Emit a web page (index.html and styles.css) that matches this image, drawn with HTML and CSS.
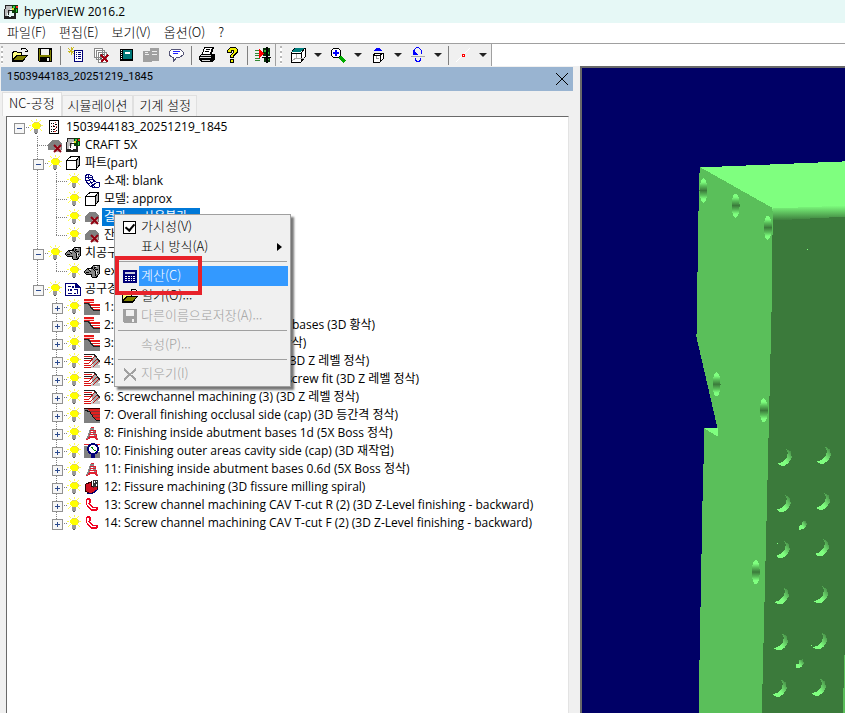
FILE: index.html
```
<!DOCTYPE html>
<html lang="ko">
<head>
<meta charset="utf-8">
<title>hyperVIEW 2016.2</title>
<link rel="stylesheet" href="styles.css">
</head>
<body>
<svg class="defs" aria-hidden="true">
  <symbol id="bulb" viewBox="0 0 16 16"><path d="M3 1l2 2M13 1l-2 2M8 0v2M1 6h2M13 6h2M2 12l3-3M14 12l-3-3" stroke="#ffff50"/><path d="M6 3h4l2 2v3l-2 2H6L4 8V5z" fill="#ff0"/><path d="M6 3h4M11 4v1M12 5v3" stroke="#e0d060" fill="none"/><path d="M6 10h4v4H6z" fill="#999"/><path d="M7 14h2v1H7z" fill="#555"/></symbol>
  <symbol id="open" viewBox="0 0 16 16"><path d="M0 14V5l1-1h3l1 1h5v3h6l-5 7H0z" fill="#000"/><path d="M1 12V6l1-1h2l1 1h4v2H4z" fill="#ffff80"/><path d="M2 13l3-4h9l-4 4z" fill="#808000"/><path d="M9 3V2l1-1h3l2 2v2M13 4h3" stroke="#000" fill="none"/></symbol>
  <symbol id="save" viewBox="0 0 16 16"><path d="M1 1h14v14H2l-1-1z" fill="currentColor"/><path d="M4 2h8v6H4z" fill="#f0f0f0"/><path d="M10 11h2v3h-2z" fill="#f0f0f0"/></symbol>
  <symbol id="machine" viewBox="0 0 16 16"><path d="M3 2h6v3H7v4H4v3H2V5h1z" fill="#bbb"/><path d="M2 1h8v1H2zM2 1h1v4H2zM1 5h1v8H1zM5 6h1v5H5zM5 6h4v1H5zM1 12h5v1H1z" fill="#222"/><path d="M9 1h6v8H9z" fill="#084008"/><path d="M10 2h2v2h-2zM13 5h1v3h-1z" fill="#3c4"/><path d="M13 2h2v2h-2z" fill="#f22"/><path d="M9 4h2v2H9z" fill="#dd2"/><path d="M11 9h2v6H1v-2h7v-1h3z" fill="#222"/></symbol>
  <symbol id="nolink" viewBox="0 0 16 16"><path d="M1 13V8l4-5h6l4 3v7z" fill="#808080"/><path d="M8 9h6v6H8z" fill="#c0a8a8"/><path d="M7 8l7 7M14 8l-7 7" stroke="#900010" stroke-width="2" shape-rendering="auto"/></symbol>
  <symbol id="cube" viewBox="0 0 16 16"><path d="M2 5l4-4h9v9l-4 5H2z" fill="#fff"/><path d="M11 5l4-3v8l-4 5z" fill="#b0b0b0"/><path d="M2 5.500h9v9H1.500V5.500L6 1.500h8.500V10L11 14.500V5.500l3.500-4" fill="none" stroke="#000"/></symbol>
  <symbol id="doc" viewBox="0 0 16 16"><path d="M3 1h10v14H3z" fill="#fff"/><path d="M3 1h10v1H3zM3 14h10v1H3zM3 1h1v14H3zM12 1h1v14h-1z" fill="#000"/><path d="M5 4h1v1H5zM5 7h1v1H5zM5 10h1v1H5zM5 12h1v1H5zM7 4h1v1H7zM9 5h2v1H9zM7 7h2v1H7zM10 8h1v1h-1zM7 10h2v1H7zM10 11h1v1h-1zM7 12h1v1H7z" fill="#000"/><path d="M9 3h1v1H9zM7 6h1v1H7zM10 7h1v1h-1zM9 9h1v1H9zM8 12h2v1H8z" fill="#d33"/></symbol>
  <symbol id="mesh" viewBox="0 0 16 16"><path d="M1 3l3-2 4 2v3l4 3h3v5l-4 1-5-2-5-6z" fill="#fff" stroke="#007"/><path d="M4 1c0 6 3 9 8 14M1 5l7-1M2 8l7-2M4 11l7-3M7 13l7-4" stroke="#007" fill="none"/></symbol>
  <symbol id="clamp" viewBox="0 0 16 16"><path d="M0 9l4-4 3 1 3-4h5v9l-3 4-4-1-1-3-4 1z" fill="#888" stroke="#000"/><path d="M4 6l3 3M8 5l3 3v5M12 3l-2 3M14 6h-3M2 9h3M14 9h-3" stroke="#000" fill="none"/><path d="M5 6h2v1H5zM11 3h2v1h-2zM12 8h1v3h-1z" fill="#eee"/></symbol>
  <symbol id="list" viewBox="0 0 16 16"><path d="M0 2h11l5 4v9H0z" fill="#007"/><path d="M1 3h9v4h5v7H1z" fill="#fff"/><path d="M3 5h3v1H3zM3 8h1v2H3zM5 8h2v2H5zM3 12h4v1H3zM7 5h2v2H7zM9 12h2v1H9zM9 8h4v1H9zM12 9h1v4h-1z" fill="#007"/></symbol>
  <symbol id="rough" viewBox="0 0 16 16"><path d="M0 3h16v13H0z" fill="#808080"/><path d="M5 3h11v9h-5L7 8z" fill="#fff"/><path d="M0 0h10v4H0zM6 5h10v2H6zM8 8h8v1H8zM9 10h7v1H9z" fill="#e81818"/><path d="M0 2h10v1H0z" fill="#fcc"/><path d="M10 0h6v4h-6z" fill="#fff"/><path d="M0 4h3l3 1 2 4 3 2h5v1h-6l-3-2-2-4-3-1H0z" fill="#222"/></symbol>
  <symbol id="level" viewBox="0 0 16 16"><path d="M0 1h10l6 7-2 8H0z" fill="#fff"/><path d="M7 6l4-4 5 7-6 6z" fill="#aaa"/><path d="M8 12h8v3H7z" fill="#c8c8c8"/><path d="M0 3h8v1H0zM0 7h6v1H0zM0 10h5v1H0zM0 12h6v1H0zM0 14h7v1H0z" fill="#d81010"/><path d="M0 1h10v1H0zM0 5h8v1H0z" fill="#222"/><path d="M6 13l8-8M9 14l6-6M5 10l6-7" stroke="#c01818"/><path d="M10 1l6 8" stroke="#222" fill="none"/></symbol>
  <symbol id="finish" viewBox="0 0 16 16"><path d="M0 1h16v15H0z" fill="#808080"/><path d="M3 2h13v11h-4L8 9 6 4z" fill="#e22020"/><path d="M6 4h10v1H6zM8 7h8v1H8zM9 10h7v1H9z" fill="#833"/><path d="M0 1h16v1H0z" fill="#300"/><path d="M1 3l5 2 3 5 3 3h4" stroke="#111" fill="none"/></symbol>
  <symbol id="boss" viewBox="0 0 16 16"><path d="M8 2c-2 3-2 8-5 12M8 2c2 3 2 8 5 12" stroke="#888" stroke-width="2" fill="none"/><path d="M7 2h3M6 5h5v2H6M5 9h7v2H5M4 12h9M2 15l4-2M14 15l-4-3" stroke="#e02030" fill="none"/></symbol>
  <symbol id="rest" viewBox="0 0 16 16"><path d="M0 3h5v12H0z" fill="#808080"/><path d="M5 9h11v6H5z" fill="#808080"/><path d="M0 1h16v1H0z" fill="#d22"/><circle cx="9" cy="6" r="5" fill="#fff" stroke="#007" stroke-width="2"/><path d="M7 4c2 0 2 4 5 4" stroke="#080" fill="none"/><path d="M7 11h4v4H7z" fill="#007"/></symbol>
  <symbol id="fissure" viewBox="0 0 16 16"><path d="M2 5l5-2v5l6-2v5l-6 4-6-3z" fill="#d01020" stroke="#300"/><path d="M9 1h5v6l-5 2z" fill="#333"/><path d="M10 2h1v2h-1zM12 2h1v1h-1zM12 5h1v2h-1z" fill="#fff"/><path d="M3 14l5 1 6-5" stroke="#007" fill="none"/></symbol>
  <symbol id="hook" viewBox="0 0 16 16"><path d="M3 1h3l1 2v2L6 7l3 3h4l1 1v2l-2 1H8l-4-3-2-4V3z" fill="#f00020"/><path d="M3 3h2v2L4 7l4 4h4v1H8l-3-2-2-3z" fill="#fff"/></symbol>
</svg>

<header class="titlebar"><svg class="ic"><use href="#machine"/></svg><h1>hyperVIEW 2016.2</h1></header>
<nav class="menubar"><button>파일(F)</button><button>편집(E)</button><button>보기(V)</button><button>옵션(O)</button><button>?</button></nav>

<div class="toolbar">
  <div class="band">
    <i class="grip"></i>
    <button aria-label="열기"><svg class="ic"><use href="#open"/></svg></button>
    <button aria-label="저장"><svg class="ic" viewBox="0 0 16 16"><path d="M1 1h14v14H2l-1-1z" fill="#000"/><path d="M2 2h1v12H2zM13 3h1v11h-1zM3 8h10v2H3z" fill="#808000"/><path d="M4 2h8v6H4z" fill="#f0f0f0"/><path d="M10 11h2v3h-2z" fill="#f0f0f0"/></svg></button>
    <i class="sep"></i>
    <button aria-label="새 목록"><svg class="ic" viewBox="0 0 16 16"><path d="M6 3h9v12H6z" fill="#007"/><path d="M7 4h7v10H7z" fill="#fff"/><path d="M8 5h1v1H8zM10 5h3v1h-3zM8 7h1v1H8zM10 7h3v1h-3zM8 9h1v1H8zM10 9h3v1h-3zM8 11h1v1H8zM10 11h3v1h-3z" fill="#007"/><path d="M0 1l6 6M6 0L1 6M3 0v8M0 4h6" stroke="#c8b820"/></svg></button>
    <button aria-label="목록 삭제"><svg class="ic" viewBox="0 0 16 16"><path d="M1 1h8v9H1zM3 3h8v9H3zM5 5h8v10H5z" fill="#fff" stroke="#888"/><path d="M7 7h4v1H7zM7 9h2v1H7zM7 11h2v1H7z" fill="#555"/><path d="M8 8l7 7M15 8l-7 7" stroke="#a00010" stroke-width="2"/></svg></button>
    <button aria-label="라이브러리"><svg class="ic" viewBox="0 0 16 16"><path d="M2 2h13v12H2z" fill="#000"/><path d="M5 3h9v9H5z" fill="#007878"/><path d="M7 5h5v2H7z" fill="#fff"/><path d="M3 3h1v1H3zM3 5h1v1H3zM3 7h1v1H3zM3 9h1v1H3zM3 11h1v1H3z" fill="#fff"/></svg></button>
    <button aria-label="붙여넣기" disabled><svg class="ic" viewBox="0 0 16 16"><path d="M0 4h9v11H0zM7 1h9v13H7z" fill="#a0a0a0"/><path d="M9 4h5v1H9zM9 7h5v1H9zM2 7h4v1H2zM2 5h3v1H2z" fill="#eee"/></svg></button>
    <button aria-label="메모"><svg class="ic" viewBox="0 0 16 16"><path d="M4 2h8l3 3v3l-3 2H9l-4 5V10H4L1 8V5z" fill="#fff" stroke="#557"/><path d="M5 4h7v1H5zM5 6h5v1H5z" fill="#22f"/></svg></button>
    <i class="sep"></i>
    <button aria-label="인쇄"><svg class="ic" viewBox="0 0 16 16"><path d="M5 0h10l-2 7h2l1 1v4l-3 3H2l-2-2V9l2-2h1z" fill="#000"/><path d="M6 1h7l-2 6H4z" fill="#fff"/><path d="M7 2h4v1H7zM6 4h4v1H6z" fill="#000"/><path d="M2 8h10v1H2zM1 10h11v1H1zM3 13h8v1H3z" fill="#ddd"/></svg></button>
    <button aria-label="도움말"><svg class="ic" viewBox="0 0 16 16"><path d="M3 6V3l3-3h5l3 3v3l-4 3v2H6V8l3-3V4H8v2z" fill="#000"/><path d="M4 5V3l2-2h5l2 2v2L9 8v2H7V8l3-3V3H7v2z" fill="#ee0"/><path d="M6 12h4v4H6z" fill="#000"/><path d="M7 13h2v2H7z" fill="#ee0"/></svg></button>
    <i class="sep"></i>
    <button aria-label="기계 연결"><svg class="ic" viewBox="0 0 16 16"><path d="M0 3h5v1H0zM0 6h4v1H0zM0 8h4v1H0zM0 11h5v1H0zM0 13h5v1H0z" fill="#383"/><path d="M8 1h7v8H8zM9 11h6v4H9z" fill="#053005"/><path d="M9 3h2v2H9zM13 5h1v2h-1zM12 12h2v1h-2z" fill="#3b3"/><path d="M4 2l5 4-5 5z" fill="#f00"/><path d="M11 0h2v16h-2zM7 10h9v1H7z" fill="#000"/></svg></button>
  </div>
  <div class="band wide">
    <i class="grip"></i>
    <button aria-label="표시"><svg class="ic" viewBox="0 0 16 16"><path d="M1 6l4-5h10v9l-4 5H1zM1 6h10v9M11 6l4-5" fill="#fff" stroke="#000"/><path d="M2 5l3-4h9l-3 4z" fill="#008080"/><path d="M6 7v4l-4 3M6 11h8" stroke="#aaa" fill="none"/></svg></button><button class="drop" aria-label="표시 옵션"></button>
    <button aria-label="확대"><svg class="ic" viewBox="0 0 16 16"><path d="M10 10l5 5" stroke="#0a0" stroke-width="3"/><circle cx="6" cy="6" r="5" fill="#fff" stroke="#000"/><path d="M6 3v6M3 6h6" stroke="#00f" stroke-width="2"/></svg></button><button class="drop" aria-label="확대 옵션"></button>
    <button aria-label="시점"><svg class="ic" viewBox="0 0 16 16"><path d="M3 8l3-2h7v6l-3 3H3zM3 8h7v7M10 8l3-2" fill="#fff" stroke="#000"/><path d="M3 4l3-2V1h4v1l3 2z" fill="#00f"/><path d="M6 9h1v3H6zM6 11h3v1H6z" fill="#999"/></svg></button><button class="drop" aria-label="시점 옵션"></button>
    <button aria-label="회전"><svg class="ic" viewBox="0 0 16 16"><path d="M4 5c1-6 7-6 8 2M5 11c1 5 5 5 6 0" fill="none" stroke="#00f"/><path d="M3 2v6h5z" fill="#00f"/><path d="M1 9h14v1H1z" fill="#aaa"/></svg></button><button class="drop" aria-label="회전 옵션"></button>
    <i class="sep"></i>
    <button aria-label="점"><svg class="ic" viewBox="0 0 16 16"><path d="M1 15L15 1" stroke="#fff"/><path d="M7 7h3v3H7z" fill="#f00"/><path d="M8 8h1v1H8z" fill="#fff"/></svg></button><button class="drop" aria-label="점 옵션"></button>
  </div>
</div>

<main class="workspace">
  <section class="panel">
    <div class="caption"><h2>1503944183_20251219_1845</h2><button aria-label="닫기"><svg viewBox="0 0 12 12"><path d="M0 0l12 12M12 0L0 12" stroke="#000"/></svg></button></div>
    <div class="tabs" role="tablist"><button class="on" role="tab">NC-공정</button><button role="tab">시뮬레이션</button><button role="tab">기계 설정</button></div>
    <ul class="tree">
      <li><div class="row"><b class="box"></b><svg class="ic"><use href="#bulb"/></svg><svg class="ic"><use href="#doc"/></svg><span>1503944183_20251219_1845</span></div>
        <ul>
          <li><div class="row"><b></b><svg class="ic"><use href="#nolink"/></svg><svg class="ic"><use href="#machine"/></svg><span>CRAFT 5X</span></div></li>
          <li><div class="row"><b class="box"></b><svg class="ic"><use href="#bulb"/></svg><svg class="ic"><use href="#cube"/></svg><span>파트(part)</span></div>
            <ul>
              <li><div class="row"><b></b><svg class="ic"><use href="#bulb"/></svg><svg class="ic"><use href="#mesh"/></svg><span>소재: blank</span></div></li>
              <li><div class="row"><b></b><svg class="ic"><use href="#bulb"/></svg><svg class="ic"><use href="#cube"/></svg><span>모델: approx</span></div></li>
              <li><div class="row"><b></b><svg class="ic"><use href="#bulb"/></svg><svg class="ic"><use href="#nolink"/></svg><span class="sel">결과: -- 사용불가 --</span></div></li>
              <li><div class="row"><b></b><svg class="ic"><use href="#bulb"/></svg><svg class="ic"><use href="#nolink"/></svg><span>잔삭</span></div></li>
            </ul></li>
          <li><div class="row"><b class="box"></b><svg class="ic"><use href="#bulb"/></svg><svg class="ic"><use href="#clamp"/></svg><span>치공구</span></div>
            <ul>
              <li><div class="row"><b></b><svg class="ic"><use href="#bulb"/></svg><svg class="ic"><use href="#clamp"/></svg><span>ex</span></div></li>
            </ul></li>
          <li><div class="row"><b class="box"></b><svg class="ic"><use href="#bulb"/></svg><svg class="ic"><use href="#list"/></svg><span>공구경로</span></div>
            <ul>
              <li><div class="row"><b class="box plus"></b><svg class="ic"><use href="#bulb"/></svg><svg class="ic"><use href="#rough"/></svg><span>1:</span></div></li>
              <li><div class="row"><b class="box plus"></b><svg class="ic"><use href="#bulb"/></svg><svg class="ic"><use href="#rough"/></svg><span>2: Roughing inside of 3 abutment bases (3D 황삭)</span></div></li>
              <li><div class="row"><b class="box plus"></b><svg class="ic"><use href="#bulb"/></svg><svg class="ic"><use href="#rough"/></svg><span>3: Roughing cavity side 2nd (3D 황삭)</span></div></li>
              <li><div class="row"><b class="box plus"></b><svg class="ic"><use href="#bulb"/></svg><svg class="ic"><use href="#level"/></svg><span>4: Screwchannel machining (1.0) (3D Z 레벨 정삭)</span></div></li>
              <li><div class="row"><b class="box plus"></b><svg class="ic"><use href="#bulb"/></svg><svg class="ic"><use href="#level"/></svg><span>5: Screwchannel machining (2.0) screw fit (3D Z 레벨 정삭)</span></div></li>
              <li><div class="row"><b class="box plus"></b><svg class="ic"><use href="#bulb"/></svg><svg class="ic"><use href="#level"/></svg><span>6: Screwchannel machining (3) (3D Z 레벨 정삭)</span></div></li>
              <li><div class="row"><b class="box plus"></b><svg class="ic"><use href="#bulb"/></svg><svg class="ic"><use href="#finish"/></svg><span>7: Overall finishing occlusal side (cap) (3D 등간격 정삭)</span></div></li>
              <li><div class="row"><b class="box plus"></b><svg class="ic"><use href="#bulb"/></svg><svg class="ic"><use href="#boss"/></svg><span>8: Finishing inside abutment bases 1d (5X Boss 정삭)</span></div></li>
              <li><div class="row"><b class="box plus"></b><svg class="ic"><use href="#bulb"/></svg><svg class="ic"><use href="#rest"/></svg><span>10: Finishing outer areas cavity side (cap) (3D 재작업)</span></div></li>
              <li><div class="row"><b class="box plus"></b><svg class="ic"><use href="#bulb"/></svg><svg class="ic"><use href="#boss"/></svg><span>11: Finishing inside abutment bases 0.6d (5X Boss 정삭)</span></div></li>
              <li><div class="row"><b class="box plus"></b><svg class="ic"><use href="#bulb"/></svg><svg class="ic"><use href="#fissure"/></svg><span>12: Fissure machining (3D fissure milling spiral)</span></div></li>
              <li><div class="row"><b class="box plus"></b><svg class="ic"><use href="#bulb"/></svg><svg class="ic"><use href="#hook"/></svg><span>13: Screw channel machining CAV T-cut R (2) (3D Z-Level finishing - backward)</span></div></li>
              <li><div class="row"><b class="box plus"></b><svg class="ic"><use href="#bulb"/></svg><svg class="ic"><use href="#hook"/></svg><span>14: Screw channel machining CAV T-cut F (2) (3D Z-Level finishing - backward)</span></div></li>
            </ul></li>
        </ul></li>
    </ul>
  </section>
  <section class="view">
    <svg viewBox="583 68 262 645" preserveAspectRatio="xMinYMin slice" role="img" aria-label="3D 모델">
      <defs>
        <linearGradient id="hole" x2="0" y2="1"><stop offset="0" stop-color="#7fff7f"/><stop offset=".15" stop-color="#7fff7f"/><stop offset=".3" stop-color="#5abf5a"/><stop offset=".5" stop-color="#3b7a3b"/><stop offset=".7" stop-color="#5abf5a"/><stop offset=".85" stop-color="#7fff7f"/></linearGradient>
        <linearGradient id="edge" x2="0" y2="1"><stop offset="0" stop-color="#7fff7f"/><stop offset="1" stop-color="#3b7a3b"/></linearGradient>
        <linearGradient id="moon" x1="1" x2="0" y2="1"><stop offset=".15" stop-color="#4c994c"/><stop offset=".6" stop-color="#7fff7f"/></linearGradient>
        <path id="c" d="M8 0l5 3 1 6-3 5-4 3H3l-3-2 5-2 4-4 1-5z" fill="url(#moon)"/>
        <path id="s" d="M3 1l4-1 1 4-3 4-5 1V5l3-1z" fill="url(#moon)"/>
        <ellipse id="h" rx="4" ry="12" fill="url(#hole)"/>
      </defs>
      <path d="M701 167l144-6v52l-73 4z" fill="#7fff7f"/>
      <path d="M772 217l73-5v501h-83z" fill="#3b7a3b"/>
      <path d="M772 208l73-3v11l-73 4z" fill="url(#edge)"/>
      <path d="M844 653h1v60h-2z" fill="#5abf5a"/>
      <path d="M701 167l71 40 1 5-1 88-5 210-5 203h-63l4-213 2-73h13l-21-91 2-124 1-39z" fill="#5abf5a"/>
      <path d="M705 427h13v8z" fill="#7fff7f"/>
      <use href="#h" x="704" y="190"/><use href="#h" x="736" y="205"/><use href="#h" x="768" y="227"/><use href="#h" x="717" y="383"/><use href="#h" x="764" y="409"/><use href="#h" x="756" y="570"/>
      <use href="#c" x="778" y="447"/><use href="#c" x="817" y="445"/><use href="#c" x="777" y="493"/><use href="#c" x="816" y="491"/><use href="#c" x="776" y="539"/><use href="#c" x="815" y="537"/><use href="#c" x="775" y="585"/><use href="#c" x="814" y="584"/><use href="#c" x="774" y="631"/><use href="#c" x="813" y="630"/><use href="#c" x="773" y="677"/><use href="#c" x="812" y="676"/>
      <use href="#s" x="799" y="519"/><use href="#s" x="796" y="657"/>
      <path d="M807 248h1v1h-1zM777 541h1v1h-1zM811 643h1v1h-1z" fill="#7fff7f"/>
    </svg>
  </section>
</main>

<div class="context" role="menu">
  <label><input type="checkbox" checked><span>가시성(V)</span></label>
  <button class="more"><i></i><span>표시 방식(A)</span></button>
  <hr>
  <button class="hot"><i><svg class="ic" viewBox="0 0 16 16"><path d="M1 2h14v13H1z" fill="#007"/><path d="M3 4h10v2H3z" fill="#ccd"/><path d="M3 8h2v1H3zM6 8h2v1H6zM9 8h1v1H9zM11 8h2v1h-2zM3 10h2v1H3zM6 10h2v1H6zM9 10h1v1H9zM11 10h2v1h-2zM3 12h2v1H3zM6 12h2v1H6zM9 12h1v1H9zM11 12h2v1h-2z" fill="#fff"/></svg></i><span>계산(C)</span></button>
  <button><i><svg class="ic"><use href="#open"/></svg></i><span>열기(O)...</span></button>
  <button disabled><i><svg class="ic"><use href="#save"/></svg></i><span>다른이름으로저장(A)...</span></button>
  <hr>
  <button disabled><i></i><span>속성(P)...</span></button>
  <hr>
  <button disabled><i><svg class="ic" viewBox="0 0 16 16"><path d="M2 3l12 11M14 3L2 14" stroke="#a0a0a0" stroke-width="2"/></svg></i><span>지우기(I)</span></button>
  <div class="marker"></div>
</div>
</body>
</html>
```
FILE: styles.css
```
* { box-sizing: border-box; }
body {
  margin: 0;
  height: 100vh;
  display: flex;
  flex-direction: column;
  overflow: hidden;
  background: #f0f0f0;
  color: #000;
  font: 13px/18px "Noto Sans CJK KR", sans-serif;
  font-weight: 300;
}
button { margin: 0; padding: 0; border: 0; background: none; color: inherit; font: inherit; }
h1, h2 { margin: 0; font: inherit; }
ul { margin: 0; padding: 0; list-style: none; }
.defs { display: none; }
.ic { display: block; width: 16px; height: 16px; flex: none; shape-rendering: crispEdges; }

.titlebar { display: flex; align-items: center; gap: 5px; height: 23px; padding-left: 3px; background: #e6f8f6; }
.titlebar h1 { font: 12px/18px "Open Sans", sans-serif; }
.menubar { display: flex; align-items: flex-start; gap: 13px; height: 20px; padding-left: 7px; background: #fff; }

.toolbar { display: flex; height: 23px; border-top: 1px solid #a0a0a0; background: #fff; }
.band { display: flex; align-items: center; gap: 9px; padding: 0 4px 0 1px; border-right: 1px solid #a0a0a0; background: #f0f0f0; }
.band.wide { gap: 8px; padding-left: 4px; }
.grip { width: 2px; height: 18px; background: repeating-linear-gradient(#b8b8b8 0 2px, #fff 2px 5px); }
.sep { width: 1px; height: 19px; margin: 0 -2px; background: #808080; }
.drop { width: 0; border: 4px solid transparent; border-top-color: #222; border-bottom: 0; }

.workspace { flex: 1; min-height: 0; display: flex; }
.panel { flex: 574 1 0; min-width: 0; display: flex; flex-direction: column; padding-left: 1px; }
.caption { display: flex; align-items: center; justify-content: space-between; height: 24px; margin-top: 1px; padding: 0 5px 0 6px; background: #99b4d1; font: 11px/18px Roboto, sans-serif; }
.caption h2 { height: 22px; }
.caption svg { display: block; width: 12px; height: 12px; }
.tabs { display: flex; align-items: flex-end; height: 25px; padding-left: 1px; }
.tabs button { height: 21px; padding: 0 5px 4px; border: 1px solid #e0e0e0; border-bottom: 0; background: #f3f3f3; }
.tabs .on { height: 24px; padding: 0 6px 4px; background: #fbfbfb; }

.tree { flex: 1; min-height: 0; margin: 0 4px 0 5px; padding: 1px 0 0 2px; border: 1px solid #696969; border-right-color: #e3e3e3; border-bottom: 0; background: #fff; overflow: hidden; }
.tree ul { margin-left: 19px; }
.tree li { background: repeating-linear-gradient(#808080 0 1px, transparent 1px 2px) 9px 0 / 1px 100% no-repeat; }
.tree li:last-child { background-size: 1px 10px; }
.tree > li:last-child { background: none; }
.row { display: flex; align-items: center; height: 18px; white-space: nowrap; font: 12px/18px "Open Sans", "Noto Sans CJK KR", sans-serif; background: repeating-linear-gradient(90deg, #808080 0 1px, transparent 1px 2px) 9px 9px / 11px 1px no-repeat; }
.row b { width: 19px; height: 9px; flex: none; }
.row .ic { margin-right: 2px; }
.row span { padding: 0 2px; }
.row .sel { background: #0078d7; color: #fff; }
.box::before { content: ""; display: block; width: 9px; height: 9px; margin-left: 5px; border: 1px solid #919191; background: linear-gradient(#2b4a8f, #2b4a8f) center / 5px 1px no-repeat, #f6f6f6; }
.plus::before { background: linear-gradient(#2b4a8f, #2b4a8f) center / 5px 1px no-repeat, linear-gradient(#2b4a8f, #2b4a8f) center / 1px 5px no-repeat, #f6f6f6; }

.view { flex: 264 1 0; min-width: 0; margin-left: 7px; border: solid #696969; border-width: 2px 0 0 2px; background: #006; }
.view svg { display: block; width: 100%; height: 100%; shape-rendering: crispEdges; }

.context { position: absolute; left: 114px; top: 214px; width: 177px; padding: 2px; border: 1px solid #a0a0a0; background: #f0f0f0; box-shadow: 3px 3px 2px #0008; }
.context label, .context button { display: flex; align-items: center; width: 100%; height: 20px; text-align: left; }
.context i { width: 22px; padding-left: 5px; flex: none; }
.context span { flex: 1; height: 20px; padding-left: 2px; }
.context hr { height: 1px; margin: 4px 1px; border: 0; background: #a0a0a0; }
.context input { appearance: none; width: 13px; height: 13px; margin: 0 3px 0 6px; border: 1px solid #000; background: #fff; }
.context input:checked::before { content: ""; display: block; width: 4px; height: 7px; margin: 0 0 0 3px; border: solid #000; border-width: 0 2px 2px 0; transform: rotate(40deg); }
.context :disabled { color: #a0a0a0; }
.context .hot span { background: #39f; color: #fff; }
.more::after { content: ""; margin-right: 6px; border: 4px solid transparent; border-left: 5px solid #000; border-right: 0; }
.marker { position: absolute; left: 0; top: 41px; width: 87px; height: 39px; border: 4px solid #e8222a; }
```
